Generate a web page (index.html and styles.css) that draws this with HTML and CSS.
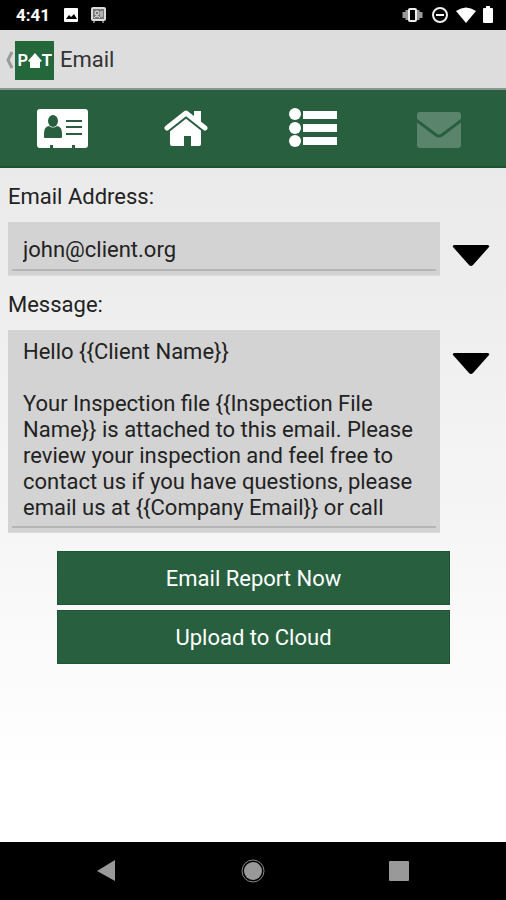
FILE: index.html
```html
<!DOCTYPE html>
<html lang="en">
<head>
<meta charset="utf-8">
<meta name="viewport" content="width=device-width, initial-scale=1">
<title>Email</title>
<link rel="stylesheet" href="styles.css">
</head>
<body>
<div class="status">
  <time class="clock">4:41</time>
  <svg class="status-left" width="44" height="18" viewBox="0 0 44 18" aria-hidden="true">
    <rect x="2" y="2" width="14" height="14" rx="1" fill="#fff"/>
    <path d="M4 13l3-4 2 2 3-3 3 5z" fill="#000"/>
    <rect x="30" y="2" width="13" height="12" rx="1" fill="#777" stroke="#ddd" stroke-width="2"/>
    <circle cx="35" cy="7" r="2" fill="none" stroke="#eee"/>
    <path d="M32 12q3-4 6 0M38 6h3M38 8h3M38 10h3M32 15v2M41 15v2" fill="none" stroke="#eee"/>
  </svg>
  <svg class="status-right" width="92" height="18" viewBox="0 0 92 18" aria-hidden="true">
    <path d="M5 4v10M2 6v6M16 4v10M19 6v6" stroke="#999" stroke-width="3"/>
    <rect x="7" y="3" width="7" height="12" rx="1" fill="#000" stroke="#eee" stroke-width="2"/>
    <circle cx="38" cy="9" r="7" fill="none" stroke="#eee" stroke-width="2"/>
    <path d="M34 9h8" stroke="#fff" stroke-width="2"/>
    <path d="M54 5q10-7 20 0L64 17z" fill="#fff"/>
    <path d="M82 2h2V0h4v2h2q1 0 1 1v13q0 1-1 1h-8q-1 0-1-1V3q0-1 1-1z" fill="#fff"/>
  </svg>
</div>

<header class="title-bar">
  <button class="back" type="button" aria-label="Back">
    <svg width="8" height="20" viewBox="0 0 8 20"><path d="M6 2L2 10l4 8" fill="none" stroke="#999" stroke-width="3"/></svg>
    <span class="logo"><span>P</span><svg width="14" height="15" viewBox="0 0 14 15"><path d="M7 0l7 8-2 1v6H2V9L0 8z" fill="#fff"/></svg><span>T</span></span>
  </button>
  <h1>Email</h1>
</header>

<nav class="tabs">
  <a href="#client" aria-label="Client">
    <svg width="54" height="42" viewBox="0 0 54 42">
      <path d="M4 2h45q3 0 3 3v33q0 3-3 3H39v-3h-3v3H17v-3h-3v3H4q-3 0-3-3V5q0-3 3-3z" fill="#fff"/>
      <g fill="#28603f"><ellipse cx="17" cy="14" rx="5" ry="6"/><path d="M8 30v-4q0-6 5-7 4 3 8 0 5 1 5 7v4q0 1-1 1H9q-1 0-1-1z"/></g>
      <path d="M30 14h16M30 20h16M30 27h16" stroke="#28603f" stroke-width="2"/>
    </svg>
  </a>
  <a href="#property" aria-label="Property">
    <svg width="48" height="42" viewBox="0 0 48 42">
      <path d="M6 22L22 10l15 12v15q0 2-2 2h-8V29h-7v10H8q-2 0-2-2z" fill="#fff"/>
      <path d="M30 4h7v14l-7-6z" fill="#fff"/>
      <path d="M3 23L22 8l19 15" fill="none" stroke="#28603f" stroke-width="6"/>
      <path d="M3 21L22 6l19 15" fill="none" stroke="#fff" stroke-width="5" stroke-linejoin="round" stroke-linecap="round"/>
      <path d="M30 4h7v12l-7-6z" fill="#fff"/>
    </svg>
  </a>
  <a href="#inspection" aria-label="Inspection">
    <svg width="50" height="42" viewBox="0 0 50 42">
      <g fill="#fff"><circle cx="6" cy="7" r="6"/><circle cx="6" cy="21" r="6"/><circle cx="6" cy="34" r="6"/><path d="M14 4h34v8H14zM14 17h34v8H14zM14 30h34v8H14z"/></g>
    </svg>
  </a>
  <a href="#email" aria-label="Email" aria-current="page">
    <svg width="46" height="42" viewBox="0 0 46 42">
      <rect x="1" y="5" width="44" height="36" rx="3" fill="#5b846c"/>
      <path d="M0 13l20 15q3 2 6 0l20-15" fill="none" stroke="#28603f" stroke-width="3"/>
    </svg>
  </a>
</nav>

<main>
  <form class="compose">
    <label for="address">Email Address:</label>
    <div class="row">
      <div class="field"><input id="address" type="email" value="john@client.org"></div>
      <button class="picker" type="button" aria-label="Choose address">
        <svg width="38" height="22" viewBox="0 0 38 22"><path d="M2 0h34q2 1 1 2L21 20q-2 2-4 0L1 2q-1-1 1-2z"/></svg>
      </button>
    </div>
    <label for="message">Message:</label>
    <div class="row">
      <div class="field"><textarea id="message" rows="7">Hello {{Client Name}}

Your Inspection file {{Inspection File Name}} is attached to this email. Please review your inspection and feel free to contact us if you have questions, please email us at {{Company Email}} or call</textarea></div>
      <button class="picker" type="button" aria-label="Choose message">
        <svg width="38" height="22" viewBox="0 0 38 22"><path d="M2 0h34q2 1 1 2L21 20q-2 2-4 0L1 2q-1-1 1-2z"/></svg>
      </button>
    </div>
    <div class="actions">
      <button type="button">Email Report Now</button>
      <button type="button">Upload to Cloud</button>
    </div>
  </form>
</main>

<footer class="system-nav">
  <button type="button" aria-label="Back"><svg width="24" height="24" viewBox="0 0 24 24"><path d="M21 1v21L3 12z" fill="#999"/></svg></button>
  <button type="button" aria-label="Home"><svg width="24" height="24" viewBox="0 0 24 24"><circle cx="12" cy="12" r="9" fill="#999"/><circle cx="12" cy="12" r="11" fill="none" stroke="#888"/></svg></button>
  <button type="button" aria-label="Overview"><svg width="24" height="24" viewBox="0 0 24 24"><rect x="2" y="2" width="20" height="20" rx="1" fill="#999"/></svg></button>
</footer>
</body>
</html>
```
FILE: styles.css
```css
* { box-sizing: border-box; }

body {
  margin: 0;
  min-height: 100vh;
  display: flex;
  flex-direction: column;
  font-family: Roboto, "Liberation Sans", sans-serif;
  font-size: 22px;
  line-height: 26px;
  color: #222;
  background: #fff;
}

button, input, textarea { font: inherit; color: inherit; border: 0; margin: 0; padding: 0; background: none; }
svg { display: block; }

.status {
  display: flex;
  align-items: center;
  height: 30px;
  padding: 0 12px 0 16px;
  background: #000;
  color: #fff;
}
.clock { font-size: 17px; font-weight: 700; }
.status-left { margin-left: 12px; }
.status-right { margin-left: auto; }

.title-bar {
  display: flex;
  align-items: center;
  gap: 6px;
  height: 60px;
  padding: 2px 0 0 6px;
  background: #ddd;
  border-bottom: 2px solid #8b9691;
}
.title-bar h1 { margin: 0; font-size: 22px; font-weight: 400; color: #333; }
.back { display: flex; align-items: center; gap: 1px; }
.logo {
  display: flex;
  align-items: center;
  justify-content: center;
  width: 39px;
  height: 39px;
  background: #23673a;
  color: #fff;
  font-family: Lato, sans-serif;
  font-size: 17px;
  font-weight: 700;
}

.tabs {
  display: grid;
  grid-template-columns: repeat(4, 1fr);
  height: 78px;
  padding-right: 4px;
  background: #28603f;
  border-bottom: 2px solid #1c5530;
}
.tabs a { display: flex; align-items: center; justify-content: center; }

main {
  flex: 1;
  padding: 0 8px;
  background: linear-gradient(#eaeaea, #eee 20%, #f5f5f5 50%, #fff 90%);
}
.compose { display: flex; flex-direction: column; }
.compose label { padding: 16px 0 12px; }
.row { display: flex; gap: 12px; padding-right: 8px; }
.field {
  flex: 1;
  display: flex;
  padding: 0 4px 4px;
  background: #d3d3d3;
  border-bottom: 1px solid #dcdcdc;
}
.field input, .field textarea {
  display: block;
  width: 100%;
  padding: 9px 10px 5px 11px;
  border-bottom: 2px solid #b5b5b5;
  border-radius: 0;
  outline: 0;
  resize: none;
  overflow: hidden;
}
.field input { height: 49px; padding: 8px 11px 0; }
.picker { width: 38px; padding-top: 23px; align-self: flex-start; }

.actions { display: flex; flex-direction: column; gap: 5px; padding: 18px 48px 0 49px; }
.actions button { height: 54px; padding-top: 2px; background: #28603f; border: 1px solid #1d5634; color: #fff; }

.system-nav {
  display: flex;
  justify-content: space-between;
  align-items: center;
  height: 58px;
  padding: 0 95px 0 94px;
  background: #000;
}
```
